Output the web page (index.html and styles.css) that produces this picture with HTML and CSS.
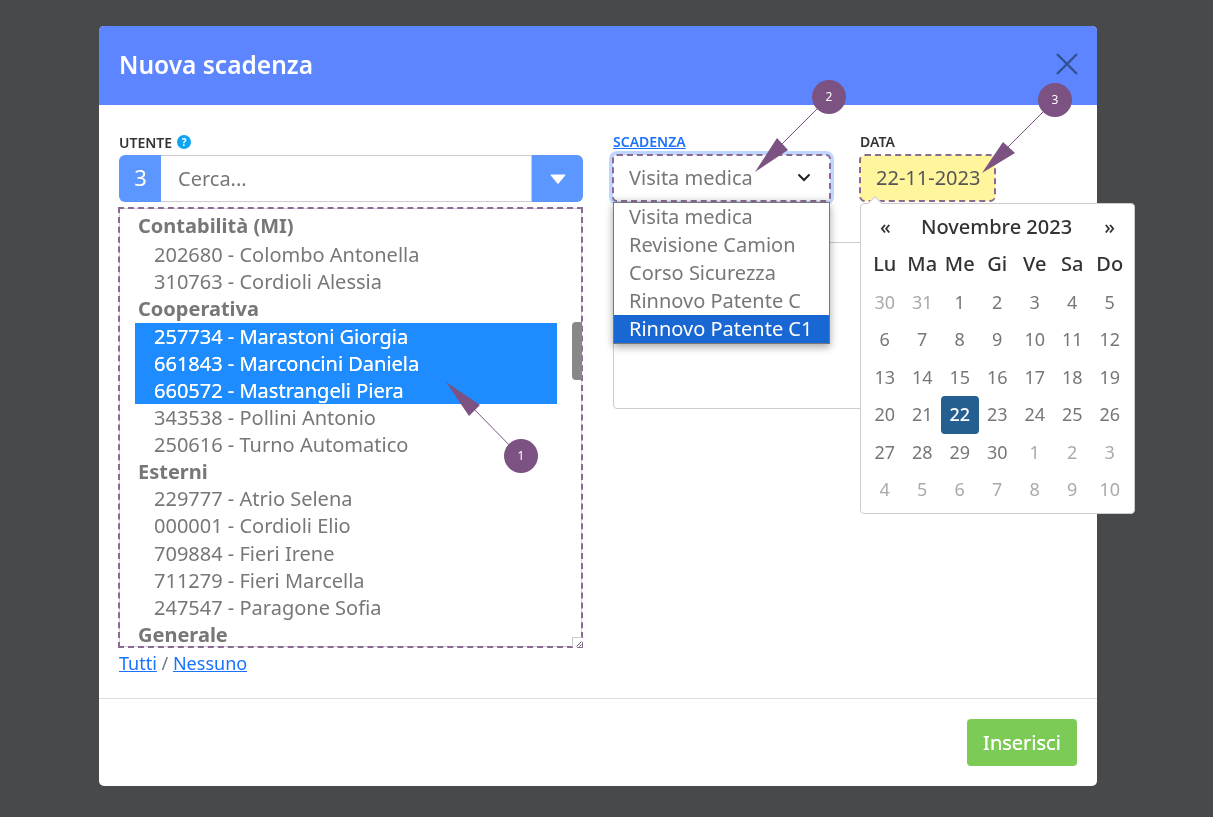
FILE: index.html
```html
<!DOCTYPE html>
<html lang="it">
<head>
<meta charset="utf-8">
<title>Nuova scadenza</title>
<link rel="stylesheet" href="styles.css">
</head>
<body>
<div class="modal">
  <header class="modal-head">
    <h1 class="modal-title">Nuova scadenza</h1>
    <svg class="close-icon" width="24" height="24" viewBox="0 0 24 24"><path d="M2 2 L22 22 M22 2 L2 22" /></svg>
  </header>
  <div class="modal-body">
    <section class="col-left">
      <div class="label label-user">UTENTE <span class="help">?</span></div>
      <div class="search">
        <span class="count">3</span>
        <span class="search-input">Cerca...</span>
        <span class="search-btn"><svg width="16" height="10" viewBox="0 0 16 10"><path d="M1.2 .5 H14.8 Q15.8 .5 15.2 1.4 L8.6 9.4 Q8 10 7.4 9.4 L.8 1.4 Q.2 .5 1.2 .5 Z"/></svg></span>
      </div>
      <div class="list">
        <div class="group group-first">Contabilità (MI)</div>
        <div class="opt">202680 - Colombo Antonella</div>
        <div class="opt">310763 - Cordioli Alessia</div>
        <div class="group">Cooperativa</div>
        <div class="opt sel">257734 - Marastoni Giorgia</div>
        <div class="opt sel">661843 - Marconcini Daniela</div>
        <div class="opt sel">660572 - Mastrangeli Piera</div>
        <div class="opt">343538 - Pollini Antonio</div>
        <div class="opt">250616 - Turno Automatico</div>
        <div class="group">Esterni</div>
        <div class="opt">229777 - Atrio Selena</div>
        <div class="opt">000001 - Cordioli Elio</div>
        <div class="opt">709884 - Fieri Irene</div>
        <div class="opt">711279 - Fieri Marcella</div>
        <div class="opt">247547 - Paragone Sofia</div>
        <div class="group">Generale</div>
        <span class="thumb"></span>
        <span class="resizer"><svg width="9" height="9" viewBox="0 0 9 9"><path d="M8.5 3.5 L3.5 8.5 M8.5 6.5 L6.5 8.5"/></svg></span>
      </div>
      <div class="links"><a href="#">Tutti</a> / <a href="#">Nessuno</a></div>
    </section>
    <section class="col-right">
      <div class="fields">
        <div class="field-sel">
          <a href="#" class="label-link">SCADENZA</a>
          <div class="select">
            <span>Visita medica</span>
            <svg width="14" height="9" viewBox="0 0 14 9"><path d="M1.5 1.5 L7 7 L12.5 1.5"/></svg>
          </div>
        </div>
        <div class="field-date">
          <div class="label">DATA</div>
          <div class="date">22-11-2023</div>
        </div>
      </div>
      <div class="textarea"></div>
      <div class="calendar">
        <span class="cal-tip"></span>
        <div class="cal-head"><span>«</span><b>Novembre 2023</b><span>»</span></div>
        <div class="cal-grid">
          <b>Lu</b><b>Ma</b><b>Me</b><b>Gi</b><b>Ve</b><b>Sa</b><b>Do</b>
          <i>30</i><i>31</i><span>1</span><span>2</span><span>3</span><span>4</span><span>5</span>
          <span>6</span><span>7</span><span>8</span><span>9</span><span>10</span><span>11</span><span>12</span>
          <span>13</span><span>14</span><span>15</span><span>16</span><span>17</span><span>18</span><span>19</span>
          <span>20</span><span>21</span><span class="today">22</span><span>23</span><span>24</span><span>25</span><span>26</span>
          <span>27</span><span>28</span><span>29</span><span>30</span><i>1</i><i>2</i><i>3</i>
          <i>4</i><i>5</i><i>6</i><i>7</i><i>8</i><i>9</i><i>10</i>
        </div>
      </div>
    </section>
  </div>
  <footer class="modal-foot"><button class="submit">Inserisci</button></footer>
</div>
<ul class="dropdown">
  <li>Visita medica</li>
  <li>Revisione Camion</li>
  <li>Corso Sicurezza</li>
  <li>Rinnovo Patente C</li>
  <li class="active">Rinnovo Patente C1</li>
</ul>
<svg class="annot" width="1213" height="817" viewBox="0 0 1213 817">
  <g class="annot-lines">
    <line x1="521" y1="457" x2="470" y2="405"/>
    <line x1="829" y1="97" x2="778" y2="148"/>
    <line x1="1055" y1="100" x2="1004" y2="151"/>
  </g>
  <g class="annot-heads">
    <polygon points="446,382 480,405 469,416"/>
    <polygon points="755,172 777,138 788,150"/>
    <polygon points="982,173 1003,142 1015,153"/>
  </g>
  <g class="annot-dots">
    <circle cx="521" cy="456" r="17"/>
    <circle cx="829" cy="97" r="17"/>
    <circle cx="1055" cy="100" r="17"/>
  </g>
  <g class="annot-nums">
    <text x="521" y="460">1</text>
    <text x="829" y="101">2</text>
    <text x="1055" y="104">3</text>
  </g>
</svg>
</body>
</html>
```
FILE: styles.css
```css
* { box-sizing: border-box; }
html, body { margin: 0; padding: 0; height: 817px; overflow: hidden; }
body { background: #48494b; font-family: "Noto Sans", sans-serif; color: #777; padding: 26px 116px 0 99px; }
.modal { width: 998px; height: 760px; background: #fff; border-radius: 5px; display: flex; flex-direction: column; will-change: transform; }
.modal-head { height: 79px; background: #5c85ff; border-radius: 5px 5px 0 0; display: flex; align-items: center; justify-content: space-between; padding: 0 18px 3px 20px; flex: none; }
.modal-title { margin: 0; font-size: 24.5px; font-weight: 600; color: #fff; }
.close-icon { fill: none; stroke: #34508f; stroke-width: 2.4; }
.modal-body { flex: 1; display: flex; gap: 30px; padding: 27px 20px 0; position: relative; }
.col-left { width: 464px; flex: none; }
.col-right { width: 464px; flex: none; position: relative; }
.label { font-size: 14px; line-height: 18px; color: #333; font-weight: 600; }
.label-user { display: flex; align-items: center; gap: 5px; height: 23px; padding-bottom: 2px; }
.help { width: 14px; height: 14px; border-radius: 50%; background: #0ea5f0; color: #fff; font-size: 10px; font-weight: 700; line-height: 14px; text-align: center; margin-top: -2px; }
.search { display: flex; height: 47px; border-radius: 6px; }
.count { width: 42px; background: #5c96ff; color: #fff; font-size: 22px; display: flex; align-items: center; justify-content: center; border-radius: 6px 0 0 6px; padding: 0 0 3px 1px; }
.search-input { flex: 1; border: 1px solid #ccc; border-width: 1px 1px 1px 0; font-size: 20px; color: #777; padding-left: 17px; line-height: 45px; }
.search-btn { width: 51px; background: #5c96ff; border-radius: 0 6px 6px 0; display: flex; align-items: center; justify-content: center; }
.search-btn svg { fill: #fff; }
.list { position: relative; margin-top: 6px; height: 439px; width: 463px; border: 1px solid #d5d0e2; outline: 2px dashed #8a6a92; outline-offset: -1px; overflow: clip; overflow-clip-margin: 1px; font-size: 20px; line-height: 27.13px; padding: 3px 0 0 15px; }
.group { font-weight: 700; padding-left: 3px; height: 27.13px; white-space: nowrap; }
.group-first { height: 29.13px; }
.opt { padding-left: 19px; height: 27.13px; width: 422px; white-space: nowrap; }
.sel { background: #1e8cff; color: #fff; text-shadow: 0 0 .5px #fff; }
.thumb { position: absolute; right: -1px; top: 113px; width: 10px; height: 58px; background: #888; border-radius: 4px 0 0 4px; }
.resizer { position: absolute; right: -1px; bottom: -1px; width: 10px; height: 10px; background: #fff; border: 1px solid #ccc; border-width: 1px 0 0 1px; line-height: 0; }
.resizer svg { stroke: #555; fill: none; display: block; }
.links { font-size: 18px; line-height: 24px; margin-top: 4px; color: #777; }
a { color: #1a73ff; }
.fields { display: flex; gap: 30px; align-items: flex-start; }
.field-sel { width: 217px; }
.label-link { display: block; height: 23px; font-size: 14px; font-weight: 600; line-height: 18px; padding-top: 1px; }
.select { height: 46px; display: flex; align-items: center; justify-content: space-between; padding: 0 19px 2px 16px; font-size: 20px; background: #fff; outline: 2px dashed #8a6a92; outline-offset: -1px; border-radius: 4px; box-shadow: 0 0 0 4px #bfd7ff, inset 0 -7px 8px -7px rgba(0,0,0,.12); }
.select svg { fill: none; stroke: #222; stroke-width: 2; }
.field-date .label { height: 23px; padding-top: 1px; }
.date { width: 135px; height: 46px; background: #fff59d; outline: 2px dashed #8a6a92; outline-offset: -1px; border-radius: 5px; font-size: 20px; line-height: 46px; padding-left: 16px; color: #555; }
.textarea { margin-top: 41px; height: 167px; border: 1px solid #ccc; border-radius: 4px; }
.dropdown { position: absolute; left: 613px; top: 202px; width: 217px; margin: 0; padding: 0; list-style: none; background: #fff; border: 1px solid #777; box-shadow: 0 3px 8px rgba(0,0,0,.35); font-size: 20px; line-height: 28px; }
.dropdown li { padding-left: 15px; white-space: nowrap; }
.dropdown .active { background: #1967d2; color: #fff; }
.calendar { position: absolute; left: 247px; top: 71px; width: 275px; height: 311px; background: #fff; border: 1px solid #ccc; border-radius: 4px; padding: 3px 5px; }
.cal-tip { position: absolute; left: 9px; top: -6px; width: 10px; height: 10px; background: #fff; border: 1px solid #ccc; border-width: 1px 0 0 1px; transform: rotate(45deg); }
.cal-head { display: flex; justify-content: space-between; align-items: center; height: 39px; padding: 0 14px; color: #333; font-size: 20px; position: relative; }
.cal-head b { font-weight: 500; position: relative; left: -1px; }
.cal-head span { font-weight: 500; }
.cal-grid { display: grid; grid-template-columns: repeat(7, 37.5px); grid-auto-rows: 37.5px; font-size: 18px; text-align: center; line-height: 37.5px; }
.cal-grid b { font-weight: 500; font-size: 20px; line-height: 36px; color: #333; }
.cal-grid i { font-style: normal; color: #aaa; }
.today { background: #255f92; color: #fff; border-radius: 4px; font-weight: 500; }
.modal-foot { height: 88px; border-top: 1px solid #ddd; flex: none; display: flex; justify-content: flex-end; padding: 20px 20px 0 0; }
.submit { width: 110px; height: 47px; background: #7dcb57; border: 0; border-radius: 4px; color: #fff; font: 400 20px "Noto Sans", sans-serif; text-shadow: 0 0 .5px #fff; }
.annot { position: absolute; left: 0; top: 0; pointer-events: none; }
.annot-lines { stroke: #7b5282; stroke-width: 1; }
.annot-heads, .annot-dots { fill: #7b5282; }
.annot-nums { fill: #fff; font-size: 12px; text-anchor: middle; }
```
